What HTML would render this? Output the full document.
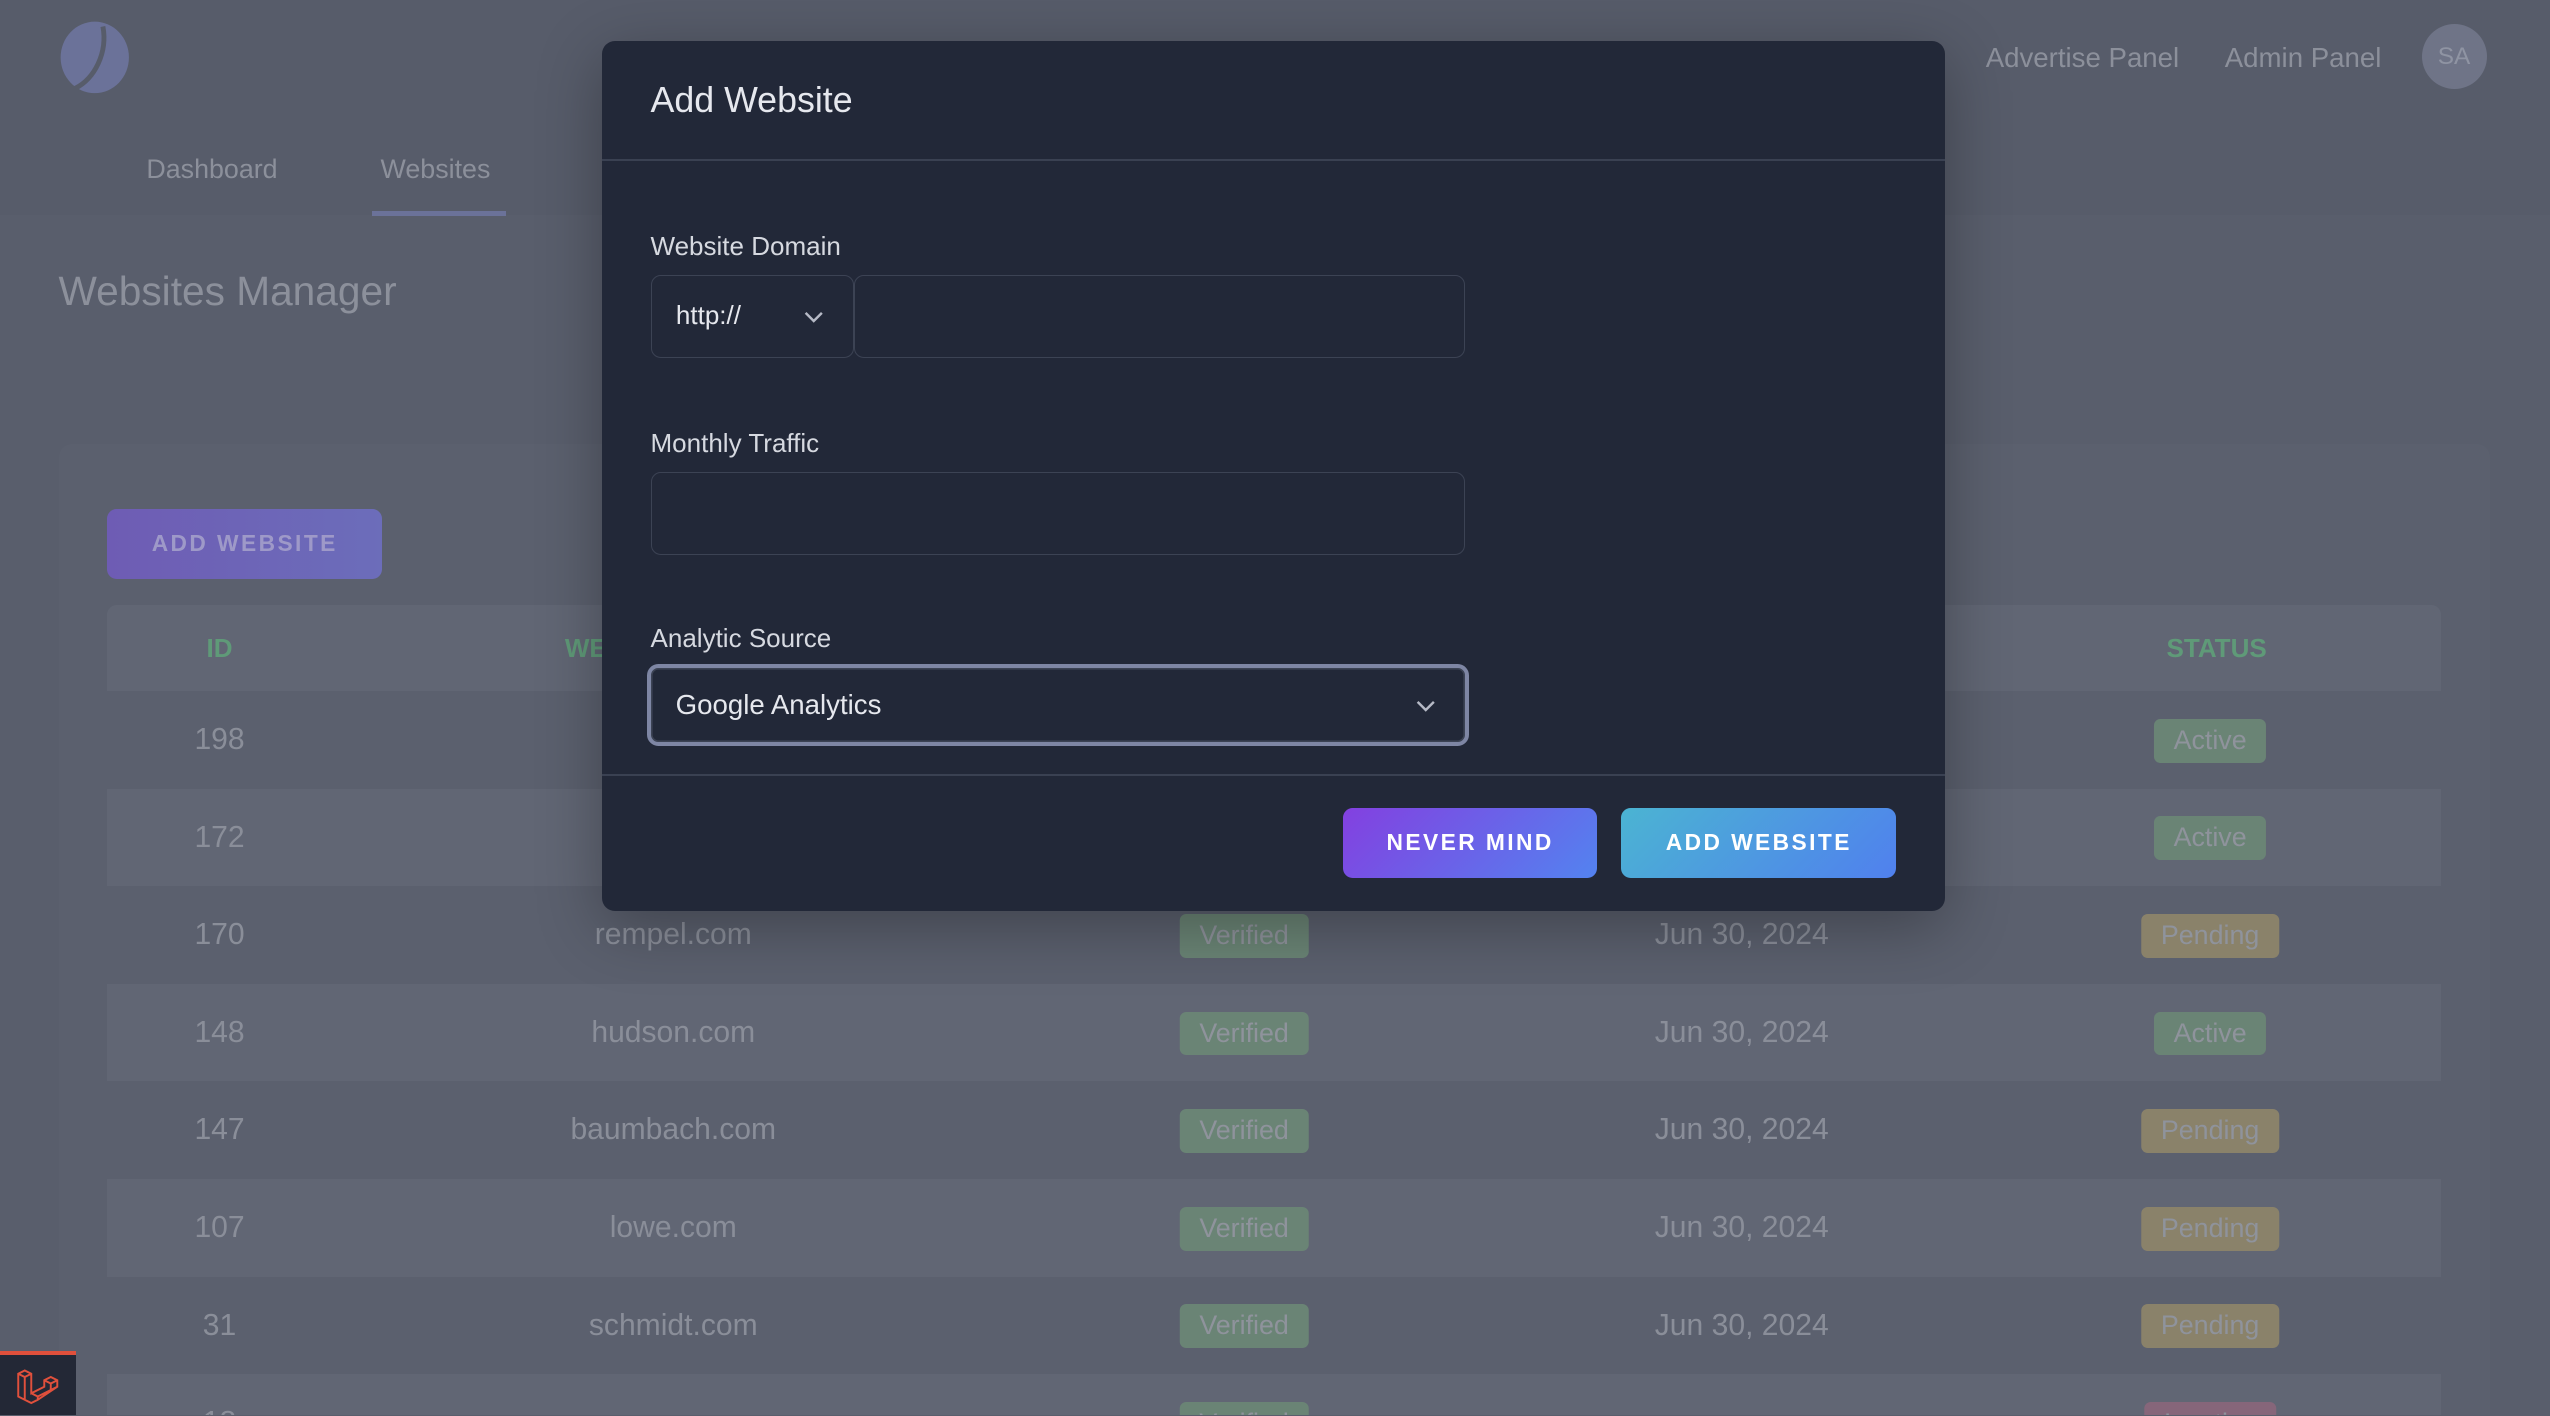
<!DOCTYPE html>
<html><head><meta charset="utf-8"><style>
*{box-sizing:border-box;margin:0;padding:0}
html,body{width:2550px;height:1416px;overflow:hidden;background:#595e6c}
#z{zoom:1.62628;width:1568px;height:870px;position:relative;font-family:"Liberation Sans",sans-serif;overflow:hidden}
.abs{position:absolute}
.hdr{left:0;top:0;width:1568px;height:132px;background:#575c6a}
.nav{font-size:16.5px;color:#8c909b}
.card{left:36px;top:273px;width:1495px;height:597px;background:#5b606e;border-radius:8px 8px 0 0}
.row{left:66px;width:1435px;height:60px}
.row.odd{background:#616674}
.cell{position:absolute;top:0;height:60px;line-height:60px;font-size:18.5px;color:#8a8e99;transform:translateX(-50%);white-space:nowrap}
.badge{position:absolute;top:17px;height:27px;line-height:27px;border-radius:4px;font-size:16.5px;color:#8f939c;padding:0 12px;transform:translateX(-50%)}
.g{background:#6a8475}.y{background:#8a826a}.p{background:#86667a}
.modal{left:370px;top:25px;width:826px;height:535px;background:#222838;border-radius:8px;box-shadow:0 10px 40px rgba(0,0,0,.3)}
.lbl{font-size:16px;color:#d6d9e0}
.inp{border:1px solid #3c4354;border-radius:6px;background:#222838}
.btn{border-radius:6px;color:#fff;font-size:14px;font-weight:bold;letter-spacing:1.5px;text-align:center;line-height:43px;height:43px}
</style></head><body><div id="z">
<div class="abs hdr"></div>
<svg class="abs" style="left:36px;top:12px" width="45" height="46" viewBox="0 0 45 46"><ellipse cx="22" cy="23" rx="21" ry="22" fill="#6b7299"/><path d="M27 4 C30 20 22 36 10 42" stroke="#575c6a" stroke-width="3" fill="none"/></svg>
<div class="abs nav" style="left:90px;top:95px">Dashboard</div>
<div class="abs nav" style="left:234px;top:95px">Websites</div>
<div class="abs" style="left:229px;top:130px;width:82px;height:3px;background:#6b7299"></div>
<div class="abs nav" style="left:1221px;top:26px;font-size:17px">Advertise Panel</div>
<div class="abs nav" style="left:1368px;top:26px;font-size:17px">Admin Panel</div>
<div class="abs" style="left:1489px;top:15px;width:40px;height:40px;border-radius:50%;background:#6f7487;color:#8f94a3;font-size:15px;text-align:center;line-height:40px">SA</div>
<div class="abs" style="left:36px;top:165px;font-size:25px;color:#8c909b">Websites Manager</div>
<div class="abs card"></div>
<div class="abs btn" style="left:66px;top:313px;width:169px;background:linear-gradient(90deg,#6e5cb4,#6c6dba);color:#9e99c8">ADD WEBSITE</div>
<div class="abs row odd" style="top:372px;height:53px;border-radius:6px 6px 0 0"></div>
<div class="abs" style="left:66px;top:372px;width:1435px;height:53px;font-size:16px;font-weight:bold;color:#5f9a78">
<span class="cell" style="left:69px;height:53px;line-height:53px;font-size:16px;color:#5f9a78">ID</span>
<span class="cell" style="left:300px;height:53px;line-height:53px;font-size:16px;color:#5f9a78">WEB</span>
<span class="cell" style="left:1297px;height:53px;line-height:53px;font-size:16px;color:#5f9a78">STATUS</span></div>
<div class="abs row" style="top:425px"><span class="cell" style="left:69px">198</span><span class="badge g" style="left:1293px">Active</span></div>
<div class="abs row odd" style="top:485px"><span class="cell" style="left:69px">172</span><span class="badge g" style="left:1293px">Active</span></div>
<div class="abs row" style="top:545px"><span class="cell" style="left:69px">170</span><span class="cell" style="left:348px">rempel.com</span><span class="badge g" style="left:699px">Verified</span><span class="cell" style="left:1005px">Jun 30, 2024</span><span class="badge y" style="left:1293px">Pending</span></div>
<div class="abs row odd" style="top:605px"><span class="cell" style="left:69px">148</span><span class="cell" style="left:348px">hudson.com</span><span class="badge g" style="left:699px">Verified</span><span class="cell" style="left:1005px">Jun 30, 2024</span><span class="badge g" style="left:1293px">Active</span></div>
<div class="abs row" style="top:665px"><span class="cell" style="left:69px">147</span><span class="cell" style="left:348px">baumbach.com</span><span class="badge g" style="left:699px">Verified</span><span class="cell" style="left:1005px">Jun 30, 2024</span><span class="badge y" style="left:1293px">Pending</span></div>
<div class="abs row odd" style="top:725px"><span class="cell" style="left:69px">107</span><span class="cell" style="left:348px">lowe.com</span><span class="badge g" style="left:699px">Verified</span><span class="cell" style="left:1005px">Jun 30, 2024</span><span class="badge y" style="left:1293px">Pending</span></div>
<div class="abs row" style="top:785px"><span class="cell" style="left:69px">31</span><span class="cell" style="left:348px">schmidt.com</span><span class="badge g" style="left:699px">Verified</span><span class="cell" style="left:1005px">Jun 30, 2024</span><span class="badge y" style="left:1293px">Pending</span></div>
<div class="abs row odd" style="top:845px;height:25px;overflow:hidden"><span class="cell" style="left:69px">18</span><span class="badge g" style="left:699px">Verified</span><span class="badge p" style="left:1293px">Inactive</span></div>
<div class="abs" style="left:0;top:831px;width:47px;height:39px;background:#232836;border-top:3px solid #e0503c"></div>
<svg class="abs" style="left:9px;top:839px" width="28" height="28" viewBox="0 0 28 28" fill="none" stroke="#e0503c" stroke-width="1.2"><path d="M2 6 L6 4 L10 6 L10 18 L18 14 L18 10 L22 8 L26 10 L26 14 L14 22 L10 24 L2 20 Z M2 6 L6 8 L10 6 M6 8 L6 22 M10 18 L14 20 L14 22 M18 10 L22 12 L26 10 M22 12 L22 16 M14 20 L26 14"/></svg>
<div class="abs modal">
<div class="abs" style="left:30px;top:24px;font-size:22px;color:#e6e8ee">Add Website</div>
<div class="abs" style="left:0;top:73px;width:826px;height:1px;background:#3a4152"></div>
<div class="abs lbl" style="left:30px;top:117px">Website Domain</div>
<div class="abs inp" style="left:30px;top:144px;width:125px;height:51px"><span style="position:absolute;left:15px;top:15px;font-size:16px;color:#e6e8ee">http://</span>
<svg style="position:absolute;left:94px;top:20px" width="12" height="10" viewBox="0 0 12 10"><path d="M1 3 L6 8 L11 3" stroke="#b6bac6" stroke-width="1.5" fill="none"/></svg></div>
<div class="abs inp" style="left:155px;top:144px;width:376px;height:51px"></div>
<div class="abs lbl" style="left:30px;top:238px">Monthly Traffic</div>
<div class="abs inp" style="left:30px;top:265px;width:501px;height:51px"></div>
<div class="abs lbl" style="left:30px;top:358px">Analytic Source</div>
<div class="abs" style="left:28px;top:383px;width:505px;height:51px;border:3px solid #7e86a4;border-radius:7px;box-shadow:inset 0 0 0 1px #3c4354"><span style="position:absolute;left:15px;top:13px;font-size:17px;color:#e6e8ee">Google Analytics</span>
<svg style="position:absolute;left:470px;top:18px" width="12" height="10" viewBox="0 0 12 10"><path d="M1 3 L6 8 L11 3" stroke="#b6bac6" stroke-width="1.5" fill="none"/></svg></div>
<div class="abs" style="left:0;top:451px;width:826px;height:1px;background:#3a4152"></div>
<div class="abs btn" style="left:456px;top:472px;width:156px;background:linear-gradient(135deg,#8340e0,#5383f0)">NEVER MIND</div>
<div class="abs btn" style="left:627px;top:472px;width:169px;background:linear-gradient(135deg,#4bb4d2,#5080ee)">ADD WEBSITE</div>
</div>
</div></body></html>
